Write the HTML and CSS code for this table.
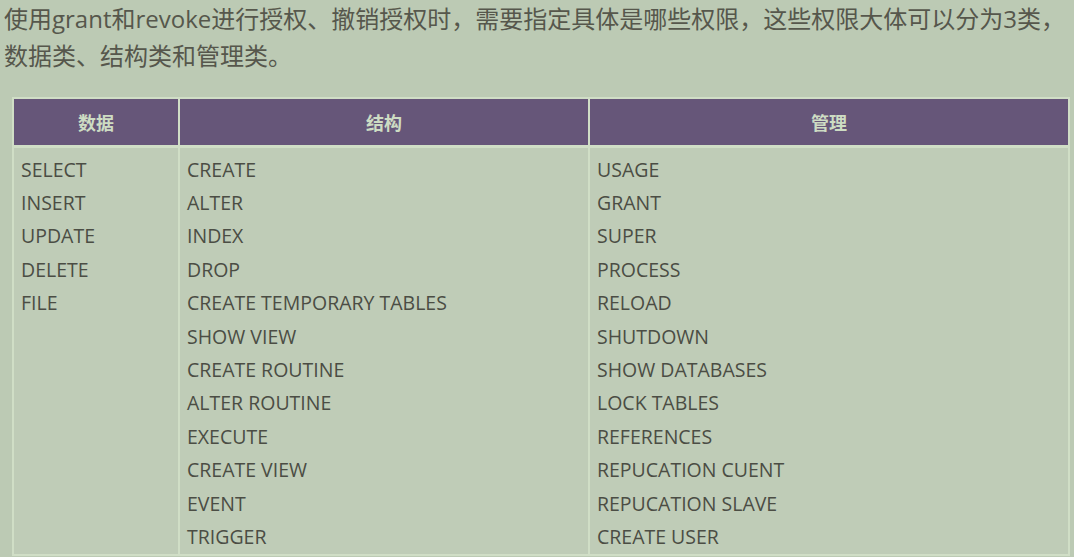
FILE: index.html
```html
<!DOCTYPE html>
<html lang="zh-CN">
  <head>
    <meta charset="UTF-8" />
    <meta name="viewport" content="width=device-width, initial-scale=1.0" />
    <title>MySQL 权限</title>
    <link rel="stylesheet" href="styles.css">
  </head>

  <body>
    <p class="intro">使用grant和revoke进行授权、撤销授权时，需要指定具体是哪些权限，这些权限大体可以分为3类，数据类、结构类和管理类。</p>

    <table class="privs">
      <colgroup>
        <col class="c1" />
        <col class="c2" />
        <col class="c3" />
      </colgroup>
      <thead>
        <tr>
          <th>数据</th>
          <th>结构</th>
          <th>管理</th>
        </tr>
      </thead>
      <tbody>
        <tr>
          <td>
            <div>SELECT</div>
            <div>INSERT</div>
            <div>UPDATE</div>
            <div>DELETE</div>
            <div>FILE</div>
          </td>
          <td>
            <div>CREATE</div>
            <div>ALTER</div>
            <div>INDEX</div>
            <div>DROP</div>
            <div>CREATE TEMPORARY TABLES</div>
            <div>SHOW VIEW</div>
            <div>CREATE ROUTINE</div>
            <div>ALTER ROUTINE</div>
            <div>EXECUTE</div>
            <div>CREATE VIEW</div>
            <div>EVENT</div>
            <div>TRIGGER</div>
          </td>
          <td>
            <div>USAGE</div>
            <div>GRANT</div>
            <div>SUPER</div>
            <div>PROCESS</div>
            <div>RELOAD</div>
            <div>SHUTDOWN</div>
            <div>SHOW DATABASES</div>
            <div>LOCK TABLES</div>
            <div>REFERENCES</div>
            <div>REPUCATION CUENT</div>
            <div>REPUCATION SLAVE</div>
            <div>CREATE USER</div>
          </td>
        </tr>
      </tbody>
    </table>
  </body>
</html>
```

FILE: styles.css
```css
* {
  box-sizing: border-box;
}

body {
  margin: 0;
  background: #bccab4;
  font-family: "Open Sans", "Noto Sans CJK SC", sans-serif;
  color: #56574c;
}

.intro {
  margin: 0;
  padding: 0 2px 0 4px;
  font-size: 24px;
  line-height: 37px;
}

.privs {
  margin: 23px 0 0 12px;
  width: 1058px;
  table-layout: fixed;
  border-collapse: collapse;
  border: 2px solid #d0dec6;
}

.c1 {
  width: 166px;
}

.c2 {
  width: 410px;
}

.privs th {
  height: 48px;
  background: #665679;
  color: #cddcc3;
  font-size: 18px;
  font-weight: bold;
  border: 2px solid #d0dec6;
  border-bottom-width: 3px;
}

.privs td {
  vertical-align: top;
  background: #bfccb7;
  border-left: 2px solid #d0dec6;
  padding: 5px 7px 1px;
  font-size: 19.5px;
  line-height: 33.4px;
  color: #4b4d44;
}
```
